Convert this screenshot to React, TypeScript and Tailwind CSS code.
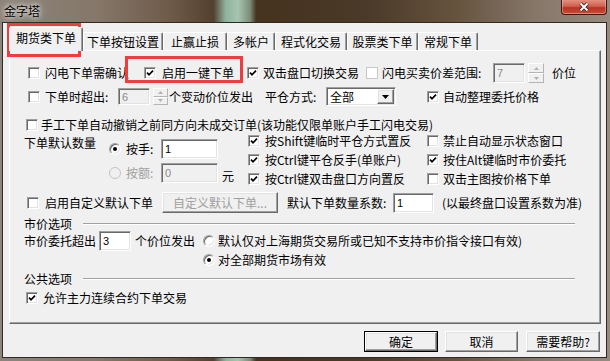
import React from 'react';

const SUNK =
  'border border-t-[#a0a0a0] border-l-[#a0a0a0] border-r-white border-b-white shadow-[inset_1px_1px_0_#696969,inset_-1px_-1px_0_#e3e3e3]';
const RAISED =
  'border border-t-white border-l-white border-r-[#696969] border-b-[#696969] shadow-[inset_-1px_-1px_0_#a0a0a0,inset_1px_1px_0_#e3e3e3]';

const Check = ({
  checked = false,
  light = false,
  label,
  className = '',
  gap = 'gap-[5px]',
}: {
  checked?: boolean;
  light?: boolean;
  label: string;
  className?: string;
  gap?: string;
}) => (
  <div className={`flex items-center shrink-0 ${gap} ${className}`}>
    <span
      className={`relative block w-[12px] h-[12px] shrink-0 bg-white ${
        light ? 'border border-[#c8c8c8]' : SUNK
      }`}
    >
      {checked && (
        <svg className="absolute left-0 top-0" width="10" height="10" viewBox="0 0 10 10">
          <path d="M2 4.6 L4 6.8 L8 2.6" fill="none" stroke="#000" strokeWidth="1.7" />
        </svg>
      )}
    </span>
    <span className="whitespace-nowrap">{label}</span>
  </div>
);

const Radio = ({ checked = false, disabled = false }: { checked?: boolean; disabled?: boolean }) => (
  <span
    className={`relative block w-[12px] h-[12px] shrink-0 rounded-full ${
      disabled ? 'border border-[#c4c4c4] bg-[#f0f0f0]' : `${SUNK} bg-white`
    }`}
  >
    {checked && <span className="absolute left-[3px] top-[3px] w-[4px] h-[4px] rounded-full bg-black" />}
  </span>
);

// spin buttons beside the small number fields (both are disabled in the picture)
const Spin = ({ className }: { className: string }) => (
  <div className={`flex flex-col shrink-0 ${className}`}>
    {[0, 1].map((i) => (
      <div
        key={i}
        className="flex-1 flex items-center justify-center bg-[#f0f0f0] border border-t-white border-l-white border-r-[#b4b4b4] border-b-[#b4b4b4]"
      >
        <svg width="5" height="3" viewBox="0 0 5 3">
          <path d={i === 0 ? 'M2.5 0 L5 3 L0 3 Z' : 'M0 0 L5 0 L2.5 3 Z'} fill="#b0b0b0" />
        </svg>
      </div>
    ))}
  </div>
);

const Field = ({ value, className, disabled = false }: { value: string; className: string; disabled?: boolean }) => (
  <div
    className={`${SUNK} shrink-0 pl-[3px] flex items-center font-['Liberation_Sans',sans-serif] text-[11px] ${
      disabled ? 'bg-[#f0f0f0] text-[#8a8a8a]' : 'bg-white'
    } ${className}`}
  >
    {value}
  </div>
);

const Group = ({ title }: { title: string }) => (
  <div className="flex items-center h-[14px] pl-[14px]">
    <span className="w-[59px] whitespace-nowrap">{title}</span>
    <span className="w-[492px] border-t border-t-[#a0a0a0] border-b border-b-white" />
  </div>
);

const tabs = [
  { label: '下单按钮设置', w: 'w-[80px]' },
  { label: '止赢止损', w: 'w-[64px]' },
  { label: '多帐户', w: 'w-[48px]' },
  { label: '程式化交易', w: 'w-[72px]' },
  { label: '股票类下单', w: 'w-[71px]' },
  { label: '常规下单', w: 'w-[60px]' },
];

export default function App() {
  return (
    <div className="relative w-[610px] h-[361px] overflow-hidden font-['Noto_Sans_CJK_SC','Noto_Sans',sans-serif] text-[12px] leading-[14px] text-black bg-[linear-gradient(90deg,#8d857c_0%,#857769_16%,#6e5a49_28%,#53402f_35%,#8fb39e_37%,#a6c5b0_39%,#7c8c78_41%,#45331f_42%,#4b3929_60%,#66543f_75%,#86776a_88%,#978a7e_100%)]">
      {/* title bar */}
      <div className="h-[22px] flex items-center pl-[4px]">
        <span className="[text-shadow:0_0_4px_#fff,0_0_8px_rgba(255,255,255,0.85)]">金字塔</span>
      </div>
      <div className="absolute left-[561px] top-0 w-[46px] h-[15px] rounded-b-[4px] border border-t-0 border-[#3b1710] bg-[linear-gradient(180deg,#e39080_0%,#d0604c_45%,#b83320_55%,#c84c36_100%)] shadow-[inset_0_-1px_0_rgba(255,255,255,0.35),inset_1px_0_0_rgba(255,255,255,0.3),inset_-1px_0_0_rgba(255,255,255,0.3)] flex items-center justify-center">
        <svg width="12" height="10" viewBox="0 0 12 10">
          <path d="M2.5 1.5 L9.5 8.5 M9.5 1.5 L2.5 8.5" stroke="#3a2626" strokeWidth="3.6" />
          <path d="M2.5 1.5 L9.5 8.5 M9.5 1.5 L2.5 8.5" stroke="#fff" strokeWidth="1.8" />
        </svg>
      </div>

      {/* client area */}
      <div className="ml-[2px] w-[605px] h-[336px] border border-[#2f2a26] bg-[#f0f0f0] flex flex-col">
        {/* tab strip */}
        <div className="mt-[4px] ml-[6px] h-[24px] flex items-end">
          <div className="relative z-10 w-[74px] h-[24px] pb-[3px] flex items-center justify-center bg-[#f0f0f0] border border-b-0 border-t-white border-l-white border-r-[#696969] shadow-[inset_-1px_0_0_#a0a0a0] rounded-t-[2px]">
            期货类下单
          </div>
          {tabs.map((t) => (
            <div
              key={t.label}
              className={`${t.w} h-[19px] flex items-center justify-center whitespace-nowrap border border-b-0 border-t-white border-l-white border-r-[#696969] shadow-[inset_-1px_0_0_#a0a0a0] rounded-t-[2px]`}
            >
              {t.label}
            </div>
          ))}
        </div>

        {/* tab panel */}
        <div className="-mt-[1px] ml-[6px] w-[592px] h-[274px] flex flex-col border border-t-white border-l-white border-r-[#696969] border-b-[#696969] shadow-[inset_-1px_-1px_0_#a0a0a0]">
          <div className="mt-[12px] h-[20px] flex items-center pl-[18px]">
            <Check label="闪电下单需确认" className="w-[116px]" />
            <Check checked label="启用一键下单" className="w-[103px]" gap="gap-[6px]" />
            <Check checked label="双击盘口切换交易" className="w-[119px]" gap="gap-[4px]" />
            <Check light label="闪电买卖价差范围:" className="w-[127px]" gap="gap-[4px]" />
            <Field value="7" disabled className="w-[32px] h-[20px]" />
            <Spin className="ml-[3px] w-[16px] h-[20px]" />
            <span className="ml-[8px]">价位</span>
          </div>

          <div className="mt-[4px] h-[19px] flex items-center pl-[18px]">
            <Check label="下单时超出:" className="w-[90px]" />
            <Field value="6" disabled className="w-[32px] h-[17px]" />
            <Spin className="ml-[3px] w-[15px] h-[17px]" />
            <span className="ml-[1px] w-[96px] whitespace-nowrap">个变动价位发出</span>
            <span className="w-[61px] whitespace-nowrap">平仓方式:</span>
            <div className={`${SUNK} w-[70px] h-[19px] bg-white flex items-center pr-[1px]`}>
              <span className="flex-1 pl-[3px]">全部</span>
              <span className={`${RAISED} w-[17px] h-[15px] bg-[#f0f0f0] flex items-center justify-center`}>
                <svg width="7" height="4" viewBox="0 0 7 4">
                  <path d="M0 0 L7 0 L3.5 4 Z" fill="#000" />
                </svg>
              </span>
            </div>
            <Check checked label="自动整理委托价格" className="ml-[31px]" gap="gap-[4px]" />
          </div>

          <div className="mt-[12px] h-[14px] flex items-center pl-[16px]">
            <Check label="手工下单自动撤销之前同方向未成交订单(该功能仅限单账户手工闪电交易)" gap="gap-[3px]" />
          </div>

          <div className="h-[56px] flex pl-[14px]">
            <div className="w-[85px] pt-[4px] whitespace-nowrap">下单默认数量</div>
            <div className="w-[139px] flex flex-col">
              <div className="mt-[7px] h-[20px] flex items-center">
                <Radio checked />
                <span className="ml-[5px] w-[35px]">按手:</span>
                <Field value="1" className="w-[57px] h-[20px]" />
              </div>
              <div className="mt-[4px] h-[20px] flex items-center">
                <Radio disabled />
                <span className="ml-[5px] w-[35px] text-[#a0a0a0]">按额:</span>
                <Field value="0" disabled className="w-[57px] h-[20px]" />
                <span className="ml-[4px] self-end">元</span>
              </div>
            </div>
            <div className="grid grid-cols-[179px_auto] grid-rows-[18px_19px_19px] items-center">
              <Check checked label="按Shift键临时平仓方式置反" />
              <Check label="禁止自动显示状态窗口" gap="gap-[4px]" />
              <Check checked label="按Ctrl键平仓反手(单账户)" />
              <Check checked label="按住Alt键临时市价委托" gap="gap-[4px]" />
              <Check checked label="按Ctrl键双击盘口方向置反" />
              <Check label="双击主图按价格下单" gap="gap-[4px]" />
            </div>
          </div>

          <div className="mt-[4px] h-[21px] flex items-center pl-[17px]">
            <Check label="启用自定义默认下单" className="w-[135px]" gap="gap-[6px]" />
            <div className={`${RAISED} w-[116px] h-[21px] bg-[#f0f0f0] flex items-center justify-center text-[#a0a0a0]`}>
              自定义默认下单...
            </div>
            <span className="ml-[9px] w-[106px] whitespace-nowrap">默认下单数量系数:</span>
            <Field value="1" className="w-[41px] h-[20px]" />
            <span className="ml-[8px] whitespace-nowrap">(以最终盘口设置系数为准)</span>
          </div>

          <div className="mt-[4px]">
            <Group title="市价选项" />
          </div>
          <div className="h-[20px] flex items-center pl-[14px]">
            <span className="w-[75px] whitespace-nowrap">市价委托超出</span>
            <Field value="3" className="w-[32px] h-[20px]" />
            <span className="ml-[4px] w-[68px] whitespace-nowrap">个价位发出</span>
            <Radio />
            <span className="ml-[3px] whitespace-nowrap">默认仅对上海期货交易所或已知不支持市价指令接口有效)</span>
          </div>
          <div className="mt-[1px] h-[16px] flex items-center pl-[193px]">
            <Radio checked />
            <span className="ml-[3px] whitespace-nowrap">对全部期货市场有效</span>
          </div>

          <div className="mt-[4px]">
            <Group title="公共选项" />
          </div>
          <div className="mt-[5px] h-[14px] flex items-center pl-[16px]">
            <Check checked label="允许主力连续合约下单交易" />
          </div>
        </div>

        {/* dialog buttons */}
        <div className="mt-[7px] flex justify-end pr-[6px]">
          <div className="w-[74px] h-[21px] border border-[#000] flex">
            <div className={`${RAISED} flex-1 bg-[#f0f0f0] flex items-center justify-center`}>确定</div>
          </div>
          <div className={`${RAISED} ml-[7px] w-[73px] h-[21px] bg-[#f0f0f0] flex items-center justify-center`}>取消</div>
          <div className={`${RAISED} ml-[8px] w-[74px] h-[21px] bg-[#f0f0f0] flex items-center justify-center`}>需要帮助?</div>
        </div>
      </div>

      {/* red annotation boxes */}
      <div className="absolute left-[7px] top-[23px] w-[74px] h-[34px] border-[3px] border-[#f03c3c]" />
      <div className="absolute left-[125px] top-[56px] w-[118px] h-[27px] border-[3px] border-[#f03c3c]" />
    </div>
  );
}
